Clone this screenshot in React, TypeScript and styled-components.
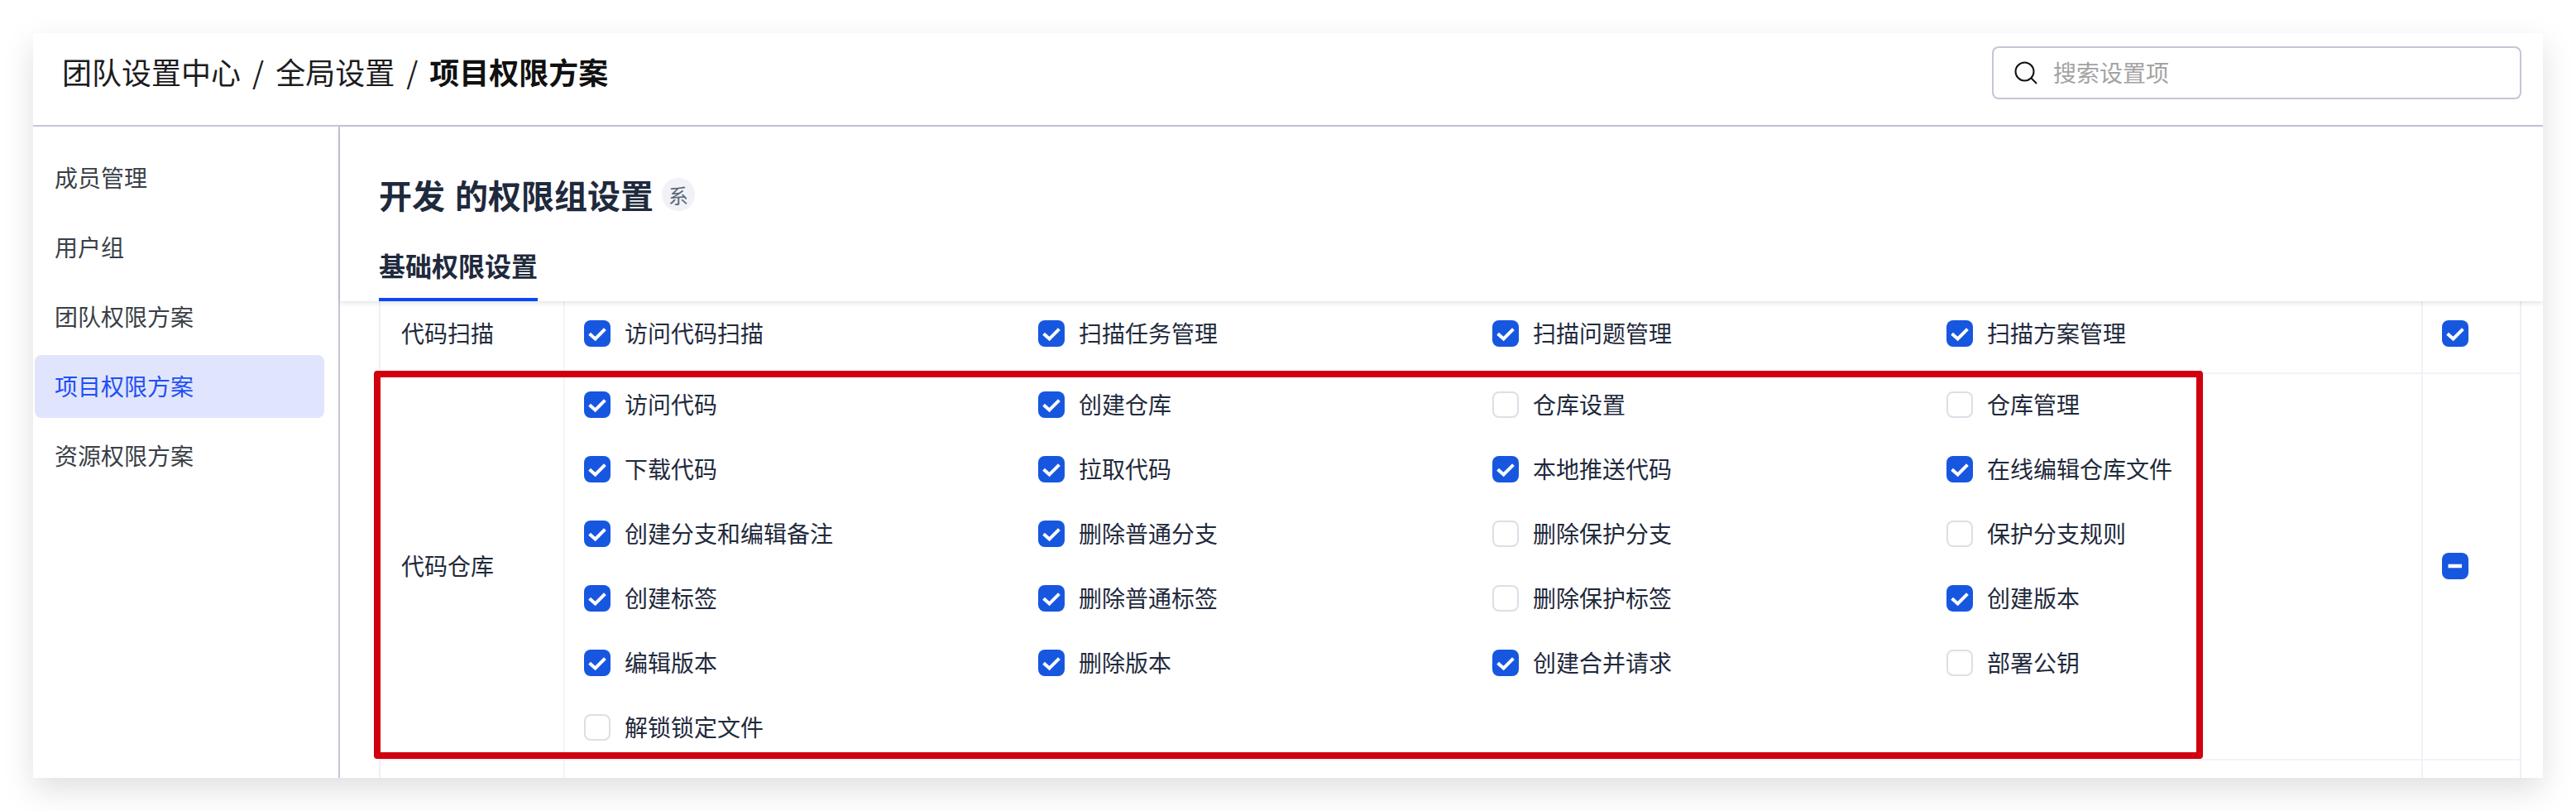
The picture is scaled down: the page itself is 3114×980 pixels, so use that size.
import React from "react"
import styled, { createGlobalStyle } from "styled-components"

const sideItems = ["成员管理", "用户组", "团队权限方案", "项目权限方案", "资源权限方案"]

type Perm = [string, boolean]

const scanPerms: Perm[] = [
  ["访问代码扫描", true],
  ["扫描任务管理", true],
  ["扫描问题管理", true],
  ["扫描方案管理", true],
]

const repoPerms: Perm[] = [
  ["访问代码", true],
  ["创建仓库", true],
  ["仓库设置", false],
  ["仓库管理", false],
  ["下载代码", true],
  ["拉取代码", true],
  ["本地推送代码", true],
  ["在线编辑仓库文件", true],
  ["创建分支和编辑备注", true],
  ["删除普通分支", true],
  ["删除保护分支", false],
  ["保护分支规则", false],
  ["创建标签", true],
  ["删除普通标签", true],
  ["删除保护标签", false],
  ["创建版本", true],
  ["编辑版本", true],
  ["删除版本", true],
  ["创建合并请求", true],
  ["部署公钥", false],
  ["解锁锁定文件", false],
]

const Checkbox = ({ state }: { state: "on" | "off" | "some" }) => (
  <Box $filled={state !== "off"}>
    {state === "on" && (
      <svg width="32" height="32" viewBox="0 0 32 32" fill="none">
        <path d="M6.6 16.2L13.6 22.4L25.4 10.6" stroke="#fff" strokeWidth="4" />
      </svg>
    )}
    {state === "some" && (
      <svg width="32" height="32" viewBox="0 0 32 32" fill="none">
        <path d="M7.5 16H24" stroke="#fff" strokeWidth="4.5" />
      </svg>
    )}
  </Box>
)

const PermList = ({ items }: { items: Perm[] }) => (
  <PermGrid>
    {items.map(([name, on]) => (
      <PermItem key={name}>
        <Checkbox state={on ? "on" : "off"} />
        <PermName>{name}</PermName>
      </PermItem>
    ))}
  </PermGrid>
)

export default function App() {
  return (
    <Page>
      <GlobalStyle />
      <Card>
        <Header>
          <Crumbs>
            团队设置中心
            <Slash>/</Slash>
            全局设置
            <Slash>/</Slash>
            <b>项目权限方案</b>
          </Crumbs>
          <Search>
            <svg width="28" height="28" viewBox="0 0 28 28" fill="none">
              <circle cx="12.5" cy="12.5" r="11" stroke="#111" strokeWidth="2" />
              <path d="M20.5 20.5L27 27" stroke="#111" strokeWidth="2" />
            </svg>
            <SearchHint>搜索设置项</SearchHint>
          </Search>
        </Header>
        <Body>
          <Sidebar>
            {sideItems.map((s) => (
              <SideItem key={s} $active={s === "项目权限方案"}>
                {s}
              </SideItem>
            ))}
          </Sidebar>
          <Main>
            <MainHead>
              <Title>
                开发 的权限组设置
                <Badge>系</Badge>
              </Title>
              <Tab>基础权限设置</Tab>
            </MainHead>
            <Table>
              <Row $top={23} $bottom={31}>
                <RowLabel>
                  <PermName>代码扫描</PermName>
                </RowLabel>
                <PermList items={scanPerms} />
                <AllCell>
                  <Checkbox state="on" />
                </AllCell>
              </Row>
              <Row $top={21} $bottom={22}>
                <RowLabel>
                  <PermName>代码仓库</PermName>
                </RowLabel>
                <PermList items={repoPerms} />
                <AllCell>
                  <Checkbox state="some" />
                </AllCell>
              </Row>
              <Row $top={21} $bottom={22}>
                <RowLabel />
                <PermGrid />
                <AllCell />
              </Row>
              <RedMark />
            </Table>
          </Main>
        </Body>
      </Card>
    </Page>
  )
}

const GlobalStyle = createGlobalStyle`
  html, body {
    margin: 0;
    background: #fff;
    overflow: hidden;
  }
  * {
    box-sizing: border-box;
  }
`

const Page = styled.div`
  height: 980px;
  padding: 40px 0 0 40px;
  font-family: "Noto Sans CJK SC", "Noto Sans", sans-serif;
`

const Card = styled.div`
  width: 3034px;
  height: 900px;
  background: #fff;
  display: flex;
  flex-direction: column;
  overflow: hidden;
  box-shadow: 0 14px 36px rgba(0, 0, 0, 0.13);
`

const Header = styled.header`
  height: 113px;
  flex: none;
  display: flex;
  align-items: center;
  justify-content: space-between;
  padding: 0 26px 15px 35px;
  border-bottom: 2px solid #c3c6d9;
`

const Crumbs = styled.div`
  font-size: 36px;
  line-height: 48px;
  padding-bottom: 4px;
  color: #1c1c1e;
  b {
    font-weight: 600;
    color: #111;
  }
`

const Slash = styled.span`
  margin: 0 14px;
`

const Search = styled.div`
  width: 640px;
  height: 64px;
  border: 2px solid #c3c6d9;
  border-radius: 8px;
  display: flex;
  align-items: center;
  gap: 18px;
  padding: 0 0 0 25px;
  font-size: 28px;
  color: #a3a3a3;
`

const SearchHint = styled.span`
  margin: -3px 0 0 1px;
`

const Body = styled.div`
  flex: 1;
  display: flex;
  min-height: 0;
`

const Sidebar = styled.nav`
  width: 371px;
  flex: none;
  border-right: 2px solid #c3c6d9;
  padding: 24px 0 0 2px;
  display: flex;
  flex-direction: column;
  gap: 8px;
`

const SideItem = styled.div<{ $active?: boolean }>`
  width: 350px;
  height: 76px;
  border-radius: 8px;
  padding: 0 0 3px 24px;
  display: flex;
  align-items: center;
  font-size: 28px;
  color: ${(p) => (p.$active ? "#1f4ff5" : "#3a3f47")};
  background: ${(p) => (p.$active ? "#e0e5fd" : "transparent")};
`

const Main = styled.main`
  flex: 1;
  min-width: 0;
  display: flex;
  flex-direction: column;
`

const MainHead = styled.div`
  height: 211px;
  flex: none;
  padding: 58px 0 0 47px;
  position: relative;
  z-index: 2;
  background: #fff;
  box-shadow: 0 2px 6px rgba(30, 40, 70, 0.14);
`

const Title = styled.h1`
  margin: 0;
  height: 48px;
  display: flex;
  align-items: center;
  gap: 10px;
  font-size: 40px;
  font-weight: 600;
  word-spacing: 3px;
  color: #1f2a3c;
  white-space: pre;
`

const Badge = styled.span`
  width: 40px;
  height: 40px;
  border-radius: 50%;
  background: #f0f2f7;
  color: #5c6575;
  font-size: 24px;
  font-weight: 400;
  display: flex;
  align-items: center;
  justify-content: center;
`

const Tab = styled.div`
  display: inline-block;
  margin-top: 33px;
  height: 72px;
  padding-top: 6px;
  font-size: 32px;
  line-height: 44px;
  font-weight: 600;
  color: #1f2a3c;
  border-bottom: 4px solid #0a48f5;
`

const Table = styled.div`
  width: 2590px;
  margin-left: 47px;
  position: relative;
  border-left: 2px solid #eef0f6;
  border-right: 2px solid #eef0f6;
`

const Row = styled.div<{ $top: number; $bottom: number }>`
  display: grid;
  grid-template-columns: 221px 2246px 119px;
  border-bottom: 2px solid #f1f3f8;
  > * {
    padding-top: ${(p) => p.$top}px;
    padding-bottom: ${(p) => p.$bottom}px;
  }
`

const RowLabel = styled.div`
  display: flex;
  align-items: center;
  padding-left: 25px;
  font-size: 28px;
  line-height: 28px;
  color: #1f2a3c;
`

const PermGrid = styled.div`
  display: grid;
  grid-template-columns: repeat(4, 549px);
  row-gap: 46px;
  padding-left: 23px;
  border-left: 2px solid #f1f3f8;
`

const PermItem = styled.div`
  height: 32px;
  display: flex;
  align-items: center;
  gap: 17px;
  font-size: 28px;
  color: #1f2a3c;
  white-space: nowrap;
`

const PermName = styled.span`
  margin-top: -3px;
`

const AllCell = styled.div`
  display: flex;
  align-items: center;
  padding-left: 23px;
  border-left: 2px solid #f1f3f8;
`

const Box = styled.span<{ $filled: boolean }>`
  width: 32px;
  height: 32px;
  flex: none;
  display: block;
  border-radius: 8px;
  background: ${(p) => (p.$filled ? "#1757e0" : "#fff")};
  border: ${(p) => (p.$filled ? "none" : "2px solid #dcdfe6")};
`

// the red annotation drawn over the code repo row
const RedMark = styled.div`
  position: absolute;
  left: -8px;
  top: 84px;
  width: 2211px;
  height: 469px;
  border: 8px solid #d0000f;
  border-radius: 4px;
  pointer-events: none;
`
